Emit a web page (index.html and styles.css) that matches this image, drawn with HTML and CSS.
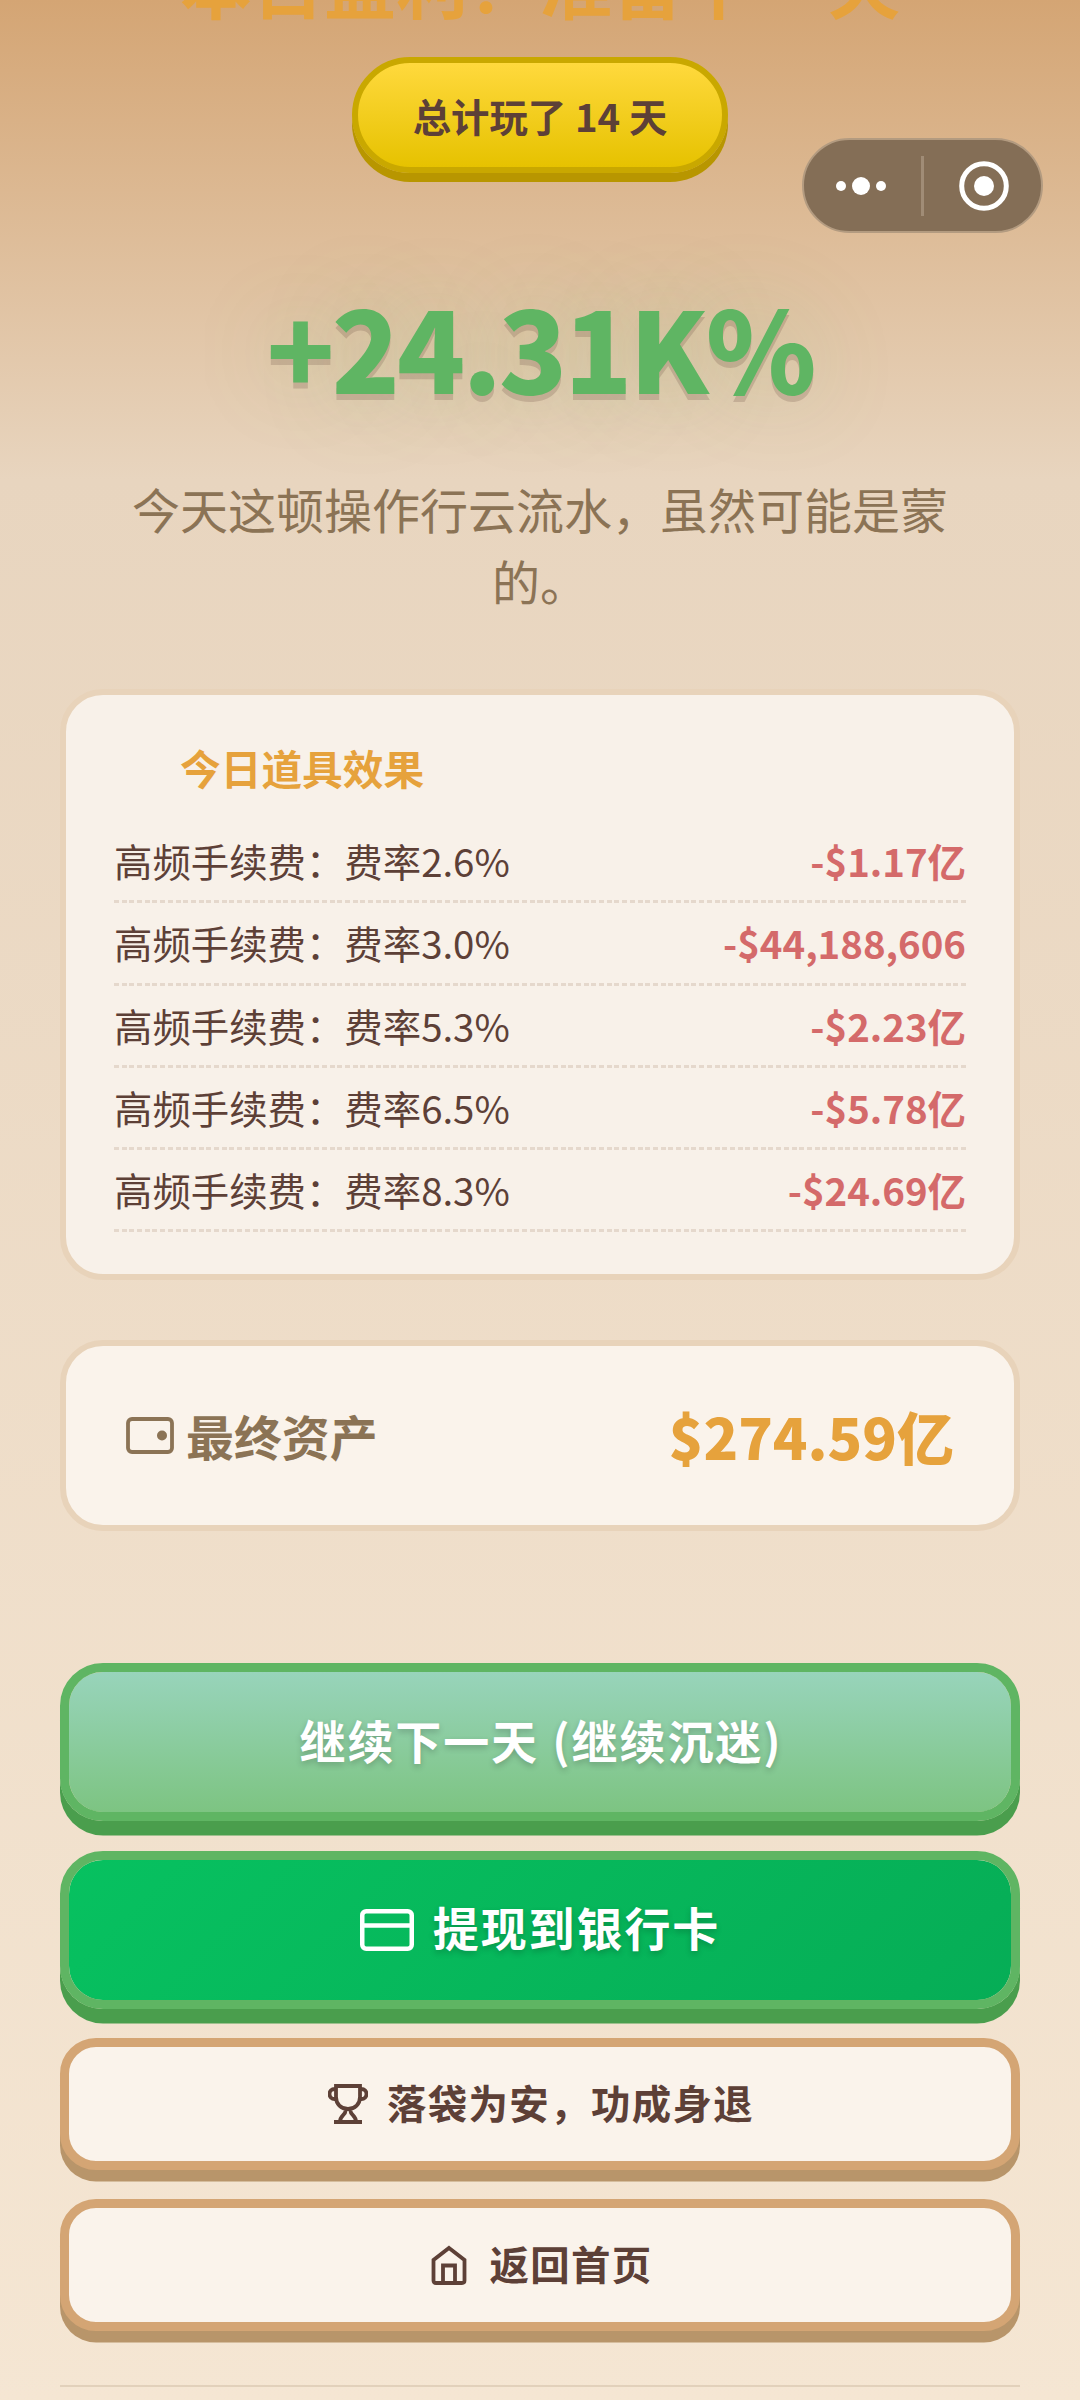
FILE: index.html
```html
<!DOCTYPE html>
<html lang="zh-CN">
<head>
<meta charset="utf-8">
<title>本日结算</title>
<link rel="stylesheet" href="styles.css">
</head>
<body>
<div class="capsule">
  <svg class="capsule-more" viewBox="0 0 50 20"><circle cx="5" cy="10" r="5"/><circle cx="25" cy="10" r="9"/><circle cx="45" cy="10" r="5"/></svg>
  <span class="capsule-line"></span>
  <svg class="capsule-close" viewBox="0 0 50 50"><circle class="ring" cx="25" cy="25" r="22.3"/><circle cx="25" cy="25" r="10"/></svg>
</div>
<main class="page">
  <h1 class="title">本日盈利！准备下一天</h1>
  <div class="badge">总计玩了 14 天</div>
  <div class="rate">+24.31K%</div>
  <p class="comment">今天这顿操作行云流水，虽然可能是蒙的。</p>

  <section class="card effects">
    <h2 class="effects-title">今日道具效果</h2>
    <ul class="rows">
      <li class="row"><span>高频手续费：费率2.6%</span><b class="loss">-$1.17亿</b></li>
      <li class="row"><span>高频手续费：费率3.0%</span><b class="loss">-$44,188,606</b></li>
      <li class="row"><span>高频手续费：费率5.3%</span><b class="loss">-$2.23亿</b></li>
      <li class="row"><span>高频手续费：费率6.5%</span><b class="loss">-$5.78亿</b></li>
      <li class="row"><span>高频手续费：费率8.3%</span><b class="loss">-$24.69亿</b></li>
    </ul>
  </section>

  <section class="card assets">
    <svg class="icon wallet" viewBox="0 0 48 37"><rect x="2" y="2" width="44" height="33" rx="4"/><circle class="dot" cx="36" cy="18.5" r="5"/></svg>
    <span class="assets-label">最终资产</span>
    <b class="assets-value">$274.59亿</b>
  </section>

  <div class="actions">
    <button class="btn big next"><span>继续下一天 (继续沉迷)</span></button>
    <button class="btn big cash"><svg class="icon bank" viewBox="0 0 54 42"><rect x="2.25" y="2.25" width="49.5" height="37.5" rx="4"/><path d="M2 16.5H52"/></svg><span>提现到银行卡</span></button>
    <button class="btn small"><svg class="icon trophy" viewBox="0 0 40 40"><path d="M8 2H32V13C32 20 27 25 20 25S8 20 8 13ZM8 5H6.500A5 5 0 0 0 6.500 15H8M32 5H33.500A5 5 0 0 1 33.500 15H32M17.500 25V27C17.500 31 12 31 12 38M22.500 25V27C22.500 31 28 31 28 38M6 38H34"/></svg><span>落袋为安，功成身退</span></button>
    <button class="btn small"><svg class="icon home" viewBox="0 0 36 40"><path d="M18 3 33.500 15V35.500Q33.500 38 31 38H5Q2.500 38 2.500 35.500V15ZM12 38V20.500H24V38"/></svg><span>返回首页</span></button>
  </div>
  <hr class="rule">
</main>
</body>
</html>
```

FILE: styles.css
```css
* { box-sizing: border-box; margin: 0; padding: 0; }

body {
  width: 1080px;
  height: 2400px;
  overflow: hidden;
  font-family: "Noto Sans CJK SC", sans-serif;
  color: #5d4037;
  background: linear-gradient(180deg, #d4a574 0, #e8d5bf 480px, #f5e6d3 2400px);
}

.page { display: flex; flex-direction: column; align-items: center; padding: 0 60px; }

.title { margin-top: -71px; height: 106px; font-size: 72px; line-height: 106px; font-weight: 700; color: #e6a23c; white-space: nowrap; }

.badge {
  margin-top: 22px; width: 376px; height: 116px; border: 6px solid #c9a800; border-radius: 58px;
  background: linear-gradient(180deg, #ffd93d, #e6c200); box-shadow: 0 9px 0 #b89600;
  font-size: 38.400px; line-height: 105px; font-weight: 700; text-align: center;
}

.rate {
  margin-top: 88px; height: 168px; line-height: 168px; font-size: 112px; font-weight: 900; letter-spacing: -2.880px; color: #5fb563;
  text-shadow: 0 6px 0 rgba(93, 64, 55, .2), 0 0 86px rgba(95, 181, 99, .25);
}

.comment { margin-top: 43px; width: 846px; font-size: 48px; line-height: 72px; text-align: center; color: #8b7355; }

.card { width: 960px; border: 6px solid #e8d3ba; border-radius: 43px; background: #faf3eb; }

.effects { margin-top: 73px; height: 591px; padding: 36px 48px 0; background: #f8f1e9; }
.effects-title { padding-left: 66px; height: 74px; line-height: 74px; font-size: 40.700px; color: #e6a23c; }
.rows { list-style: none; margin-top: 16px; }
.row {
  display: flex; justify-content: space-between; height: 82.300px; padding-top: 1px; line-height: 77px; font-size: 38.400px;
  background: repeating-linear-gradient(90deg, #e5d8cc 0 5px, transparent 5px 7.700px) left bottom / 100% 3px no-repeat;
}
.loss { color: #d46a6a; font-weight: 700; }

.assets { margin-top: 60px; height: 191px; padding: 0 60px; display: flex; align-items: center; }
.assets-label { margin-left: 12px; font-size: 47.900px; font-weight: 700; color: #8b7355; }
.assets-value { margin-left: auto; font-size: 57px; font-weight: 900; color: #e6a23c; }
.assets-label, .assets-value { padding-bottom: 2px; }

.actions { width: 100%; margin-top: 132px; display: flex; flex-direction: column; }
.btn { display: flex; align-items: center; justify-content: center; width: 100%; font-family: inherit; font-weight: 700; border: 9px solid; }
.btn span { padding-bottom: 6px; }
.big { height: 158px; margin-bottom: 29.500px; border-color: #5fb563; border-radius: 43px; box-shadow: 0 14.400px 0 #4a9e4d; font-size: 46px; letter-spacing: 1.900px; color: #fff; text-shadow: 0 3px 6px rgba(0, 0, 0, .2); }
.next { background: linear-gradient(180deg, #98d4bb, #7dc482) padding-box; padding-left: 2px; word-spacing: 1px; }
.big span { padding-bottom: 7px; }
.cash { background: linear-gradient(135deg, #07c160, #06ad56) padding-box; }
.small { height: 132px; margin-bottom: 29px; border-color: #d4a574; border-radius: 36px; background: #faf3eb; box-shadow: 0 11.500px 0 #b8956a; font-size: 39.400px; letter-spacing: 1.400px; color: #5d4037; }

.icon { flex: none; fill: none; stroke: currentColor; }
.wallet { width: 48px; height: 37px; color: #8b7355; stroke-width: 3.800; }
.wallet .dot { fill: currentColor; stroke: none; }
.bank { width: 54px; height: 42px; margin-right: 19px; stroke-width: 4.500; }
.trophy { width: 40px; height: 40px; margin-left: 2px; margin-right: 19px; stroke-width: 3.800; }
.home { width: 36px; height: 40px; margin-left: 4px; margin-right: 22px; stroke-width: 3.800; }

.rule { width: 100%; border: 0; height: 2px; margin-top: 25px; background: #e2d1bb; }

.capsule {
  position: absolute; left: 802px; top: 138px; width: 241px; height: 95px; border: 2px solid #b39b80; border-radius: 48px;
  background: #846e56; display: flex; align-items: center;
}
.capsule svg { fill: #fff; }
.capsule-more { width: 50px; height: 20px; margin-left: 32px; }
.capsule-line { width: 3px; height: 60px; margin-left: 35px; background: #a08c76; }
.capsule-close { width: 50px; height: 50px; margin-left: 35px; }
.capsule-close .ring { fill: none; stroke: #fff; stroke-width: 5; }
```
